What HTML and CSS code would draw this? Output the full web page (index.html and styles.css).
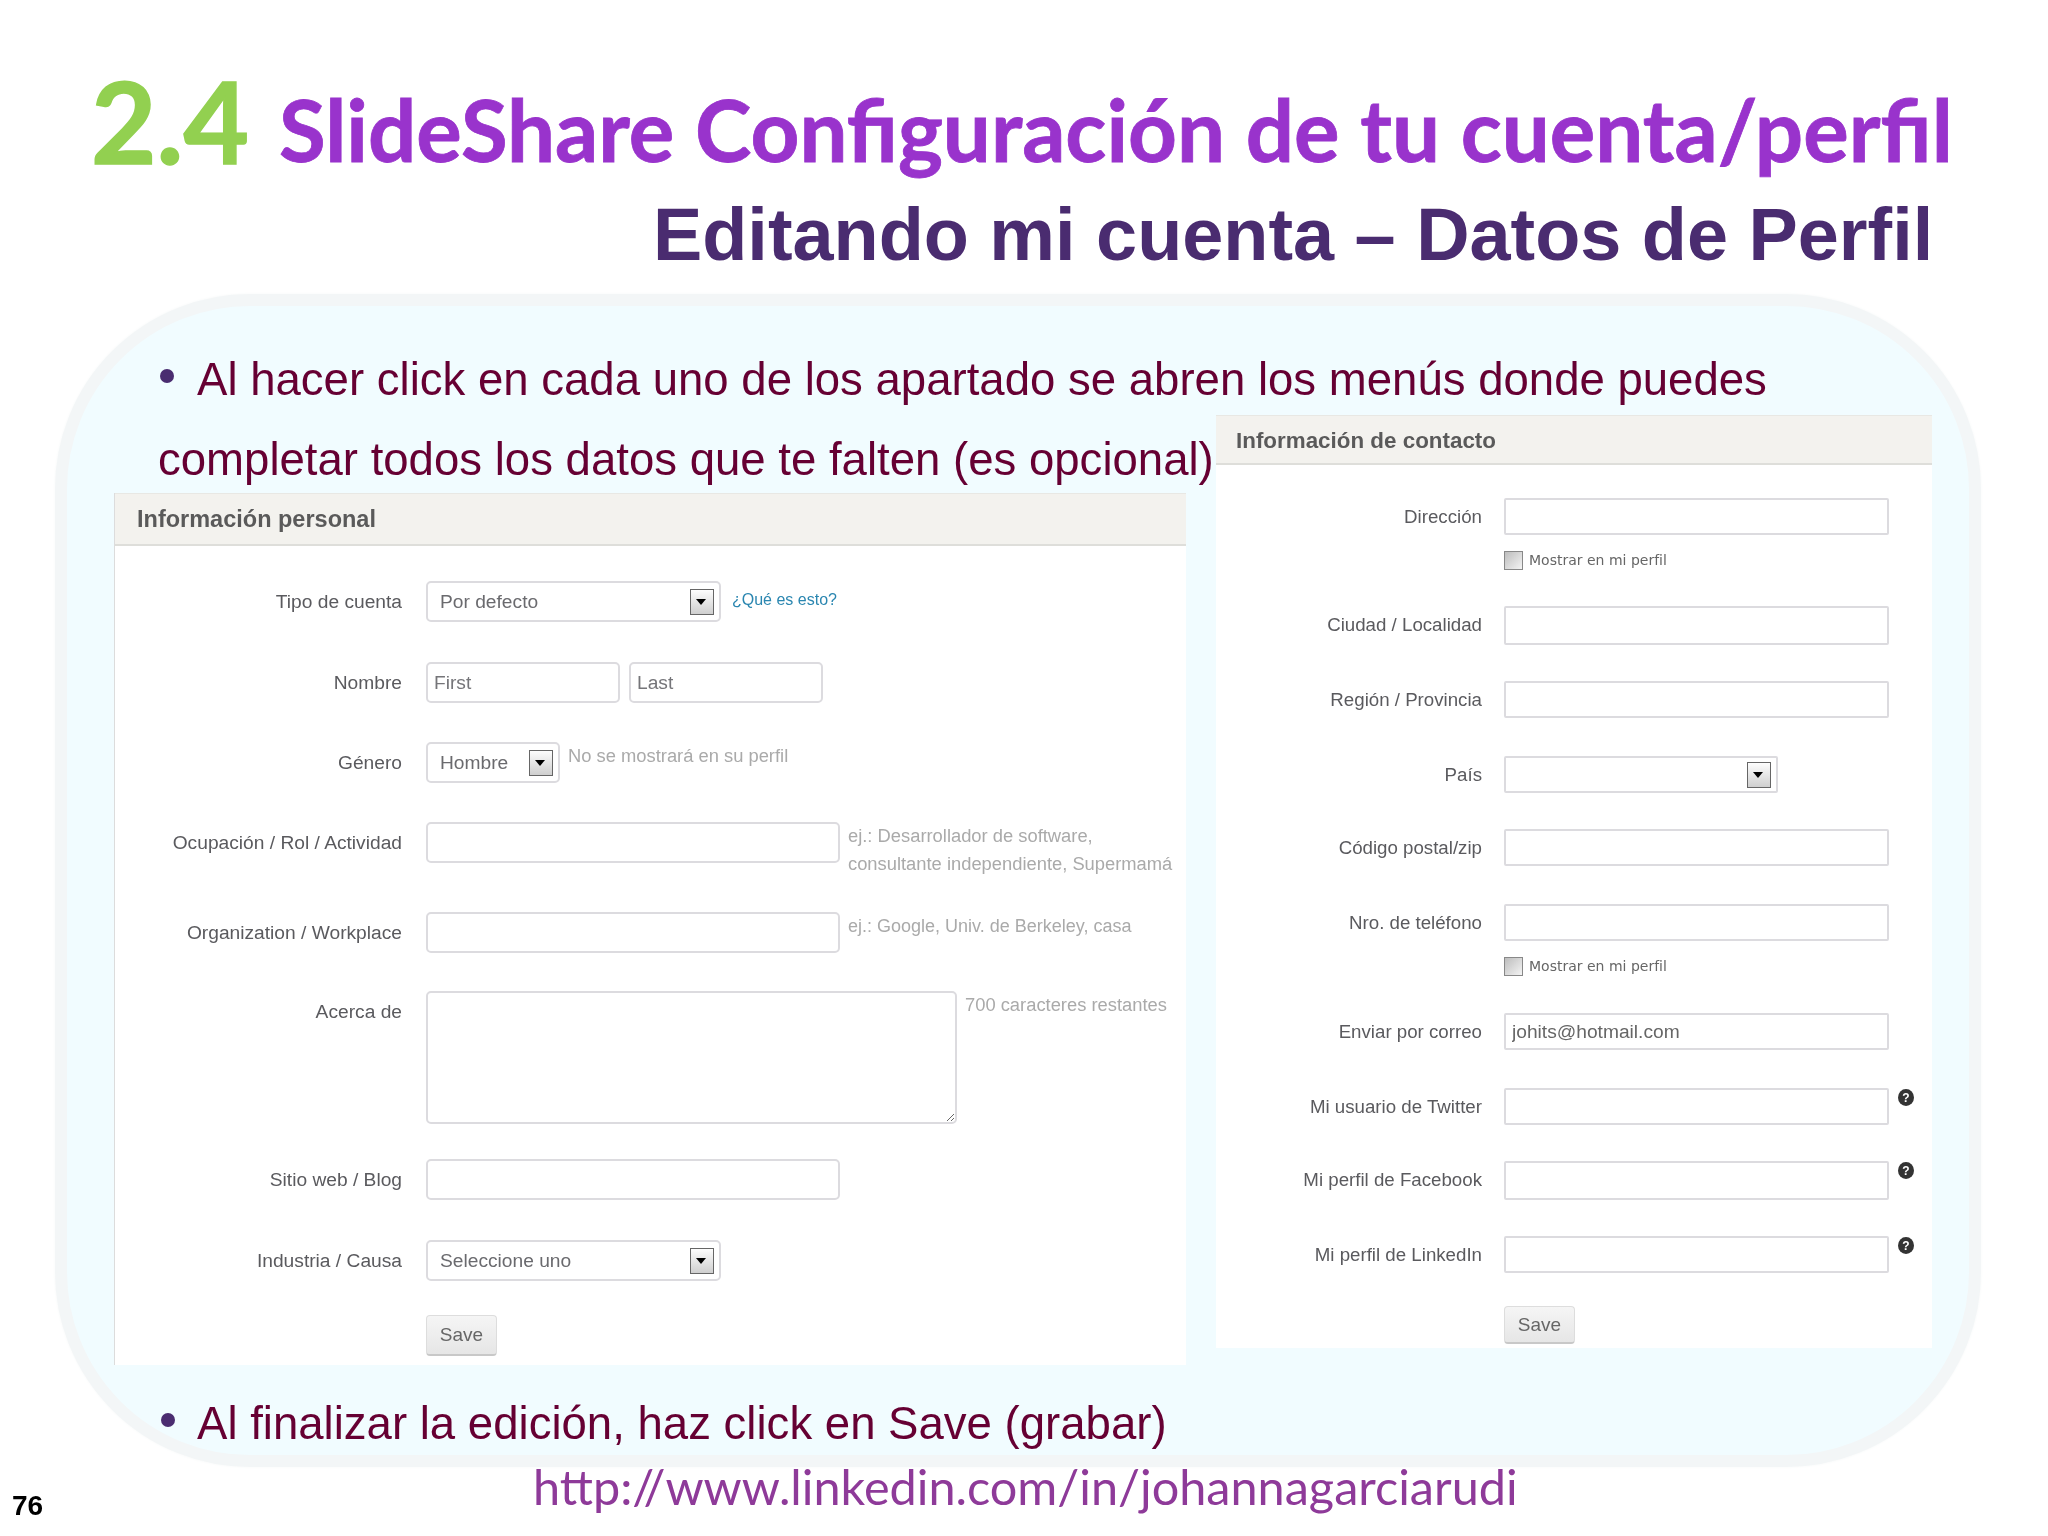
FILE: index.html
```html
<!DOCTYPE html>
<html lang="es">
<head>
<meta charset="utf-8">
<title>SlideShare Configuración de tu cuenta/perfil</title>
<link rel="stylesheet" href="styles.css">
</head>
<body>
<main class="slide">
  <div class="backdrop"></div>
  <h1 class="title-number">2.4</h1>
  <h2 class="title-main">SlideShare Configuración de tu cuenta/perfil</h2>
  <h3 class="subtitle">Editando mi cuenta – Datos de Perfil</h3>

  <p class="bullet bullet-top">Al hacer click en cada uno de los apartado se abren los menús donde puedes<br><span class="outdent">completar todos los datos que te falten (es opcional)</span></p>

  <section class="panel panel-personal">
    <header class="panel-head">Información personal</header>
    <div class="form form-personal">
      <label class="label">Tipo de cuenta</label>
      <div class="field"><div class="select select-wide"><span>Por defecto</span><i class="arrow"></i></div><a class="link">¿Qué es esto?</a></div>

      <label class="label">Nombre</label>
      <div class="field field-names"><input class="input input-name" value="First"><input class="input input-name" value="Last"></div>

      <label class="label">Género</label>
      <div class="field"><div class="select select-small"><span>Hombre</span><i class="arrow"></i></div><p class="hint">No se mostrará en su perfil</p></div>

      <label class="label">Ocupación / Rol / Actividad</label>
      <div class="field"><input class="input input-mid"><p class="hint">ej.: Desarrollador de software,<br>consultante independiente, Supermamá</p></div>

      <label class="label">Organization / Workplace</label>
      <div class="field"><input class="input input-mid"><p class="hint hint-tight">ej.: Google, Univ. de Berkeley, casa</p></div>

      <label class="label">Acerca de</label>
      <div class="field"><textarea class="input textarea"></textarea><p class="hint">700 caracteres restantes</p></div>

      <label class="label">Sitio web / Blog</label>
      <div class="field"><input class="input input-mid"></div>

      <label class="label">Industria / Causa</label>
      <div class="field"><div class="select select-wide"><span>Seleccione uno</span><i class="arrow"></i></div></div>

      <span></span>
      <div class="field"><button class="save" type="button">Save</button></div>
    </div>
  </section>

  <section class="panel panel-contact">
    <header class="panel-head">Información de contacto</header>
    <div class="form form-contact">
      <label class="label">Dirección</label>
      <div class="stack"><input class="input input-long"><div class="check"><i class="box"></i><span>Mostrar en mi perfil</span></div></div>

      <label class="label">Ciudad / Localidad</label>
      <div class="field"><input class="input input-long input-tall"></div>

      <label class="label">Región / Provincia</label>
      <div class="field"><input class="input input-long"></div>

      <label class="label">País</label>
      <div class="field"><div class="select select-country"><span></span><i class="arrow"></i></div></div>

      <label class="label">Código postal/zip</label>
      <div class="field"><input class="input input-long"></div>

      <label class="label">Nro. de teléfono</label>
      <div class="stack"><input class="input input-long"><div class="check"><i class="box"></i><span>Mostrar en mi perfil</span></div></div>

      <label class="label">Enviar por correo</label>
      <div class="field"><input class="input input-long" value="johits@hotmail.com"></div>

      <label class="label">Mi usuario de Twitter</label>
      <div class="field"><input class="input input-long"><b class="help">?</b></div>

      <label class="label">Mi perfil de Facebook</label>
      <div class="field"><input class="input input-long input-tall"><b class="help">?</b></div>

      <label class="label">Mi perfil de LinkedIn</label>
      <div class="field"><input class="input input-long"><b class="help">?</b></div>

      <span></span>
      <div class="field"><button class="save save-contact" type="button">Save</button></div>
    </div>
  </section>

  <p class="bullet bullet-bottom">Al finalizar la edición, haz click en Save (grabar)</p>
  <a class="profile-url">http://www.linkedin.com/in/johannagarciarudi</a>
  <span class="page-number">76</span>
</main>
</body>
</html>
```

FILE: styles.css
```css
* { box-sizing: border-box; }
html, body { margin: 0; padding: 0; background: #fff; }
body { font-family: "Liberation Sans", Arial, sans-serif; }

.slide { position: relative; width: 2048px; height: 1536px; overflow: hidden; background: #fff; filter: blur(0.5px); }

.backdrop {
  position: absolute; left: 55px; top: 294px; width: 1926px; height: 1173px;
  background: #f1fcff; border: 12px solid #f3f6f7; border-radius: 195px;
  box-shadow: 0 0 3px #f6f8f8;
}

.title-number, .title-main, .subtitle { position: absolute; margin: 0; line-height: 1; white-space: nowrap; }
.title-number { left: 91px; top: 64px; font: 700 113px/1 Lato, sans-serif; color: #92d050; -webkit-text-stroke: 1.5px #92d050; }
.title-main { left: 279px; top: 87px; font: 700 85.2px/1 Lato, sans-serif; color: #9933cc; -webkit-text-stroke: 0.8px #9933cc; }
.subtitle { left: 653px; top: 198px; font-size: 73.85px; font-weight: 700; color: #4a2c70; }

.bullet { position: absolute; margin: 0; font-size: 45.55px; color: #660033; white-space: nowrap; }
.bullet::before { content: ""; position: absolute; width: 14px; height: 14px; border-radius: 50%; background: #4a2c70; }
.bullet-top { left: 197px; top: 340px; line-height: 80px; }
.bullet-top::before { left: -37px; top: 29px; }
.outdent { margin-left: -39px; }
.bullet-bottom { left: 197px; top: 1401px; line-height: 1; }
.bullet-bottom::before { left: -36px; top: 12px; }

.profile-url { position: absolute; left: 533px; top: 1462px; font: 400 48.6px/1 Lato, sans-serif; color: #8e3a99; white-space: nowrap; }
.page-number { position: absolute; left: 12px; top: 1492px; font-size: 28px; line-height: 1; font-weight: 700; color: #000; }

.panel { position: absolute; background: #fff; }
.panel-personal { left: 114px; top: 493px; width: 1072px; height: 872px; border-left: 1px solid #dcdcdc; }
.panel-contact { left: 1216px; top: 415px; width: 716px; height: 933px; }

.panel-head {
  display: flex; align-items: center; padding: 1px 0 0 22px;
  background: #f3f2ee; border-top: 1px solid #e8e8e4; border-bottom: 2px solid #dededa;
  font-weight: 700; font-size: 23.5px; color: #5a5a5a;
}
.panel-personal .panel-head { height: 53px; }
.panel-contact .panel-head { height: 50px; padding: 2px 0 0 20px; font-size: 22.4px; }

.form { display: grid; }
.form-personal {
  padding-top: 35px; column-gap: 24px;
  grid-template-columns: 287px 1fr;
  grid-template-rows: 81px 80px 80px 90px 79px 168px 81px 75px 41px;
}
.form-contact {
  padding-top: 33px; column-gap: 22px;
  grid-template-columns: 266px 1fr;
  grid-template-rows: 108px 75px 75px 73px 75px 109px 75px 73px 75px 70px 38px;
}

.label { text-align: right; font-size: 19.2px; line-height: 42px; color: #5a5a5e; white-space: nowrap; }
.form-contact .label { font-size: 18.7px; line-height: 38px; }

.field { display: flex; align-items: flex-start; gap: 8px; }
.field-names { gap: 9px; }
.stack { display: flex; flex-direction: column; align-items: flex-start; gap: 16px; }

.input {
  display: block; margin: 0; height: 41px; padding: 0 6px; background: #fff;
  border: 2px solid #dcdbdf; border-radius: 5px; outline: none;
  font: 19.2px "Liberation Sans", Arial, sans-serif; color: #757579;
}
.input-name { width: 194px; }
.input-mid { width: 414px; }
.textarea { width: 531px; height: 133px; resize: both; }
.input-long { width: 385px; height: 37px; border-radius: 2px; color: #666; }
.input-tall { height: 39px; }

.select {
  display: flex; align-items: center; justify-content: space-between; height: 41px;
  padding: 0 5px 0 12px; background: #fff; border: 2px solid #dcdbdf; border-radius: 5px;
  font-size: 19.2px; color: #6a6a6e;
}
.select-wide { width: 295px; }
.select-small { width: 134px; }
.select-country { width: 274px; height: 37px; border-radius: 2px; }

.arrow {
  position: relative; display: block; flex: none; width: 24px; height: 26px;
  border: 1.5px solid #666; background: linear-gradient(#fdfdfd, #cfcfcf);
}
.arrow::after {
  content: ""; position: absolute; left: 5px; top: 9px;
  border-left: 5.5px solid transparent; border-right: 5.5px solid transparent; border-top: 6px solid #000;
}

.link { margin-left: 3px; font-size: 16px; line-height: 38px; color: #2a86b0; }
.hint { margin: 0; font-size: 18.35px; line-height: 28px; color: #aaa; white-space: nowrap; }
.hint-tight { font-size: 18px; }

.check { display: flex; align-items: flex-start; gap: 6px; font: 14px/18px "DejaVu Sans", sans-serif; color: #666; }
.box { display: block; width: 19px; height: 19px; border: 1.5px solid #888; background: linear-gradient(135deg, #bdbdbd, #f4f4f4); }

.help {
  display: flex; align-items: center; justify-content: center; width: 16px; height: 17px; margin-left: 1px; margin-top: 1px;
  border-radius: 50%; background: #333; color: #fff; font-size: 12px; line-height: 1;
}

.save {
  width: 71px; height: 41px; padding: 0; background: linear-gradient(#f5f5f5, #e6e6e6);
  border: 1px solid #ddd; border-bottom: 2px solid #c8c8c8; border-radius: 4px;
  font: 19px "Liberation Sans", Arial, sans-serif; color: #666;
}
.save-contact { height: 38px; }
```
